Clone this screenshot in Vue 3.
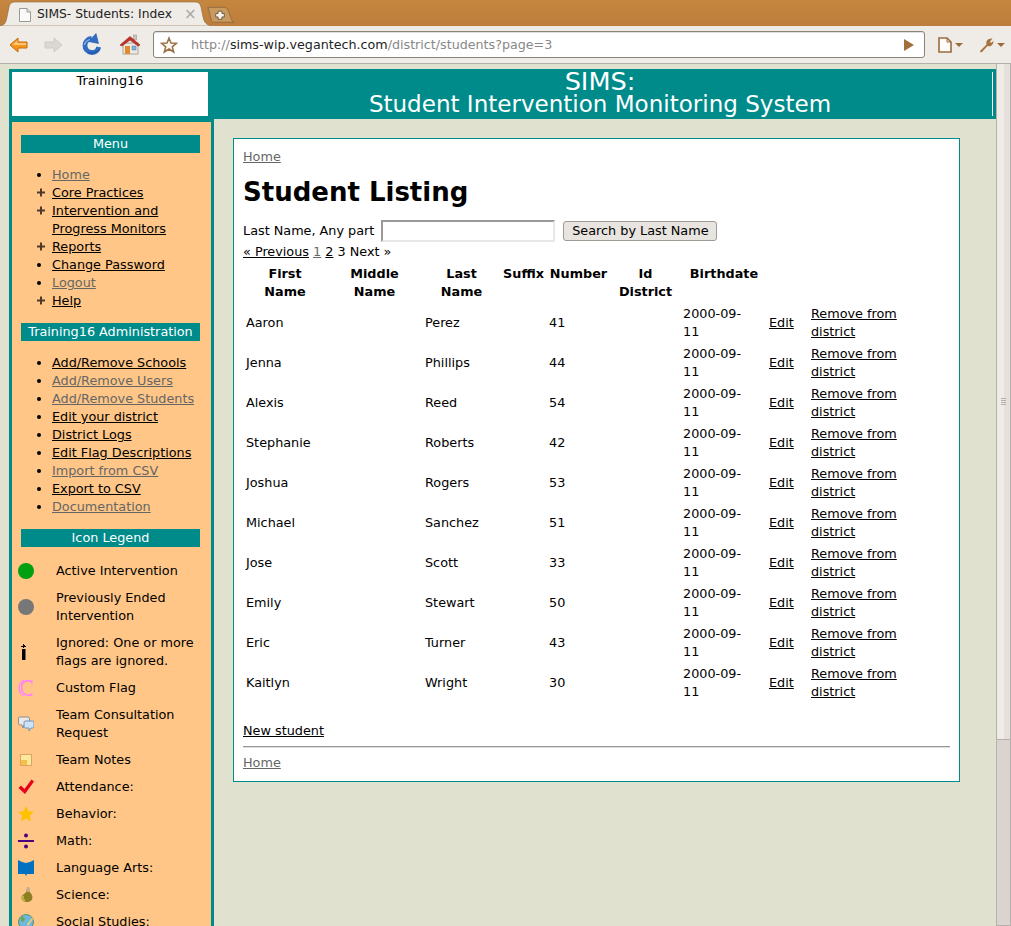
<script setup>
const menu = [
  { t: 'Home', v: 1 }, { t: 'Core Practices', p: 1 }, { t: 'Intervention and Progress Monitors', p: 1 },
  { t: 'Reports', p: 1 }, { t: 'Change Password' }, { t: 'Logout', v: 1 }, { t: 'Help', p: 1 }
]
const admin = [
  { t: 'Add/Remove Schools' }, { t: 'Add/Remove Users', v: 1 }, { t: 'Add/Remove Students', v: 1 },
  { t: 'Edit your district' }, { t: 'District Logs' }, { t: 'Edit Flag Descriptions' },
  { t: 'Import from CSV', v: 1 }, { t: 'Export to CSV' }, { t: 'Documentation', v: 1 }
]
const legend = [
  ['active', 'Active Intervention'], ['ended', 'Previously Ended Intervention'],
  ['ignored', 'Ignored: One or more flags are ignored.'], ['custom', 'Custom Flag'],
  ['consult', 'Team Consultation Request'], ['notes', 'Team Notes'], ['check', 'Attendance:'],
  ['star', 'Behavior:'], ['math', 'Math:'], ['book', 'Language Arts:'], ['science', 'Science:'],
  ['globe', 'Social Studies:']
]
const students = [
  ['Aaron', 'Perez', 41], ['Jenna', 'Phillips', 44], ['Alexis', 'Reed', 54], ['Stephanie', 'Roberts', 42],
  ['Joshua', 'Rogers', 53], ['Michael', 'Sanchez', 51], ['Jose', 'Scott', 33], ['Emily', 'Stewart', 50],
  ['Eric', 'Turner', 43], ['Kaitlyn', 'Wright', 30]
]
</script>

<template>
  <div class="window">
    <div class="tabbar">
      <div class="tab">
        <svg class="tabshape" width="216" height="26" viewBox="0 0 216 26">
          <path d="M0 26 C5 25 6 22 7 17 L9 7 C10 3 12 2 16 2 L194 2 C198 2 200 3 201 7 L203 17 C204 22 206 25 212 26 Z" fill="#efebe7" stroke="#8f6a3e" stroke-width="0.6" />
        </svg>
        <svg class="favicon" width="14" height="16" viewBox="0 0 14 16">
          <path d="M1.5 1.5 H9 L12.5 5 V14.5 H1.5 Z" fill="#fbfafa" stroke="#9b9b95" />
          <path d="M9 1.5 V5 H12.5" fill="#e2e2de" stroke="#9b9b95" />
        </svg>
        <span class="tabtitle">SIMS- Students: Index</span>
        <span class="tabclose">×</span>
      </div>
      <svg class="newtab" width="27" height="18" viewBox="0 0 28 18">
        <path d="M1 1 H18 C20 1 21 2 22 4 L26 15 C26.500 16 27 16.500 28 16.500 H7 C5.500 16.500 5 16 4.500 14.500 Z" fill="#c99a5f" stroke="#94693a" />
        <path d="M11.500 5 H15.500 V7.500 H18 V11 H15.500 V13.500 H11.500 V11 H9 V7.500 H11.500 Z" fill="#f7f3ec" stroke="#6e5a44" />
      </svg>
    </div>
    <div class="toolbar">
      <svg class="tool back" width="20" height="18" viewBox="0 0 20 18">
        <path d="M1 9 L9 2 V6 H18 V12 H9 V16 Z" fill="#f5971d" stroke="#c9690c" />
        <path d="M4 8.500 L8.500 4.500 V7 H17 V9 H4 Z" fill="#fcc677" />
      </svg>
      <svg class="tool forward" width="20" height="18" viewBox="0 0 20 18">
        <path d="M19 9 L11 2 V6 H2 V12 H11 V16 Z" fill="#dbd7d2" stroke="#cfcac5" />
      </svg>
      <svg class="tool reload" width="20" height="23" viewBox="0 0 20 23">
        <path d="M9.500 5.500 A7 7 0 1 0 16.800 14" fill="none" stroke="#2f6cc2" stroke-width="4.800" />
        <path d="M14 0.500 L16.500 10.500 L6.500 8.500 Z" fill="#2f6cc2" stroke="#2559a8" stroke-width="0.600" stroke-linejoin="round" />
        <path d="M2.500 12 C3 9 5 7.300 8 6.500" fill="none" stroke="#9cc0ec" stroke-width="1.200" />
        <path d="M6 19.500 C10 21.200 15 19.500 17.500 16" fill="none" stroke="#1d4d9a" stroke-width="1" />
      </svg>
      <svg class="tool home" width="22" height="21" viewBox="0 0 22 21">
        <rect x="14.500" y="1" width="3" height="5" fill="#c9c5bf" stroke="#8d8880" stroke-width="0.500" />
        <rect x="4" y="9" width="15" height="11" fill="#ece9e3" stroke="#a9a49c" />
        <path d="M1 11 L11 2.500 L21 11 L19 12 L11 6 L3 12 Z" fill="#c2302a" stroke="#98211c" stroke-width="0.600" />
        <rect x="6" y="12" width="5" height="8" fill="#e08a2e" />
        <rect x="13" y="12" width="4" height="4" fill="#7fb0d8" stroke="#5d7f9e" stroke-width="0.500" />
      </svg>
      <div class="omnibox">
        <svg class="omnistar" width="18" height="18" viewBox="0 0 18 18">
          <path d="M9 2 L11 7 L16.500 7.300 L12.300 10.800 L13.700 16 L9 13 L4.300 16 L5.700 10.800 L1.500 7.300 L7 7 Z" fill="#fbf8f3" stroke="#9a6f43" stroke-width="1.500" />
        </svg>
        <span class="url"><span class="dim">http://</span>sims-wip.vegantech.com<span class="dim">/district/students?page=3</span></span>
        <svg class="go" width="10" height="12" viewBox="0 0 10 12"><path d="M0 0 L10 6 L0 12 Z" fill="#a16f3c" /></svg>
      </div>
      <svg class="tool page-menu" width="14" height="16" viewBox="0 0 14 16">
        <path d="M1 1 H9 L13 5 V15 H1 Z" fill="#fdfcfa" stroke="#9a6c3d" stroke-width="1.600" />
        <path d="M9 1 V5 H13" fill="none" stroke="#9a6c3d" />
      </svg>
      <svg class="caret" width="8" height="4" viewBox="0 0 8 4"><path d="M0 0 H8 L4 4 Z" fill="#9a6c3d" /></svg>
      <svg class="tool wrench" width="16" height="16" viewBox="0 0 16 16">
        <path d="M2 14 L8.500 7.500 C7.500 4 10 1 14.500 1.500 L12 4.500 L13 6 L15.500 4 C15.500 8 12.500 10 9.500 9 L4 15 C3 15.500 1.500 15 2 14 Z" fill="#a8723c" />
      </svg>
      <svg class="caret" width="8" height="4" viewBox="0 0 8 4"><path d="M0 0 H8 L4 4 Z" fill="#9a6c3d" /></svg>
    </div>

    <div class="viewport">
      <div class="page">
        <header class="banner">
          <div class="district">Training16</div>
          <div class="title">
            <div class="title-main">SIMS:</div>
            <div>Student Intervention Monitoring System</div>
          </div>
        </header>
        <div class="body">
          <aside class="sidebar">
            <h3 class="bar">Menu</h3>
            <ul class="links">
              <li v-for="m in menu" :key="m.t" :class="{ plus: m.p }"><a href="#" :class="{ visited: m.v }">{{ m.t }}</a></li>
            </ul>
            <h3 class="bar">Training16 Administration</h3>
            <ul class="links">
              <li v-for="m in admin" :key="m.t"><a href="#" :class="{ visited: m.v }">{{ m.t }}</a></li>
            </ul>
            <h3 class="bar">Icon Legend</h3>
            <div class="legend">
              <div v-for="l in legend" :key="l[0]" class="legend-row">
                <svg class="licon" width="16" height="16" viewBox="0 0 16 16">
                  <circle v-if="l[0] === 'active'" cx="8" cy="8" r="8" fill="#00a010" />
                  <circle v-else-if="l[0] === 'ended'" cx="8" cy="8" r="8" fill="#777777" />
                  <g v-else-if="l[0] === 'ignored'" fill="#000" transform="translate(-1 0)">
                    <path d="M6 0 H7 V1 H8 V2 H9 V3 H7 V4 H6 V3 H4 V2 H6 Z" />
                    <rect x="5" y="5" width="3" height="1" />
                    <rect x="5" y="5" width="3.500" height="11" />
                  </g>
                  <g v-else-if="l[0] === 'custom'" fill="none" stroke="#ff80ff">
                    <path d="M6 0.500 C-0.500 3 -0.500 13 6 16" stroke-width="1.200" />
                    <path d="M14 2 C10 -1 3.500 1 3.500 8 C3.500 14 10 17 14.500 14" stroke-width="1.600" />
                    <path d="M14 0.500 V4.500" stroke-width="1" />
                  </g>
                  <g v-else-if="l[0] === 'consult'">
                    <path d="M1 1 H10 Q11.500 1 11.500 3 V7 Q11.500 9 10 9 H6 L5 12 L4 9 H2 Q0.500 9 0.500 7 V3 Q0.500 1 1 1 Z" fill="#ece9e4" stroke="#8f8f8f" />
                    <path d="M7 5 H14.500 Q16 5 16 7 V10 Q16 12 14.500 12 H13 L11 15 L11 12 H7.500 Q6 12 6 10 V7 Q6 5 7 5 Z" fill="#cfe3f7" stroke="#6f97c4" />
                  </g>
                  <g v-else-if="l[0] === 'notes'">
                    <rect x="2.500" y="2.500" width="11" height="11" fill="#fbe9a0" stroke="#e0a35c" />
                    <path d="M3 8 H9 V13 H3 Z" fill="#f3c04a" />
                  </g>
                  <path v-else-if="l[0] === 'check'" d="M0.500 9 L3 6.500 L6.500 10 L13.500 0.500 L16 2.500 L7 15 Z" fill="#e8001c" />
                  <path v-else-if="l[0] === 'star'" d="M8 0 L10.300 5.200 L16 5.800 L11.800 9.700 L13 15.500 L8 12.500 L3 15.500 L4.200 9.700 L0 5.800 L5.700 5.200 Z" fill="#ffc000" />
                  <g v-else-if="l[0] === 'math'" fill="#4b0082">
                    <circle cx="8" cy="2.500" r="2" />
                    <rect x="0" y="7" width="16" height="2" />
                    <circle cx="8" cy="13.500" r="2" />
                  </g>
                  <path v-else-if="l[0] === 'book'" d="M0 0 L4 2 L8 3 L12 2 L16 0 V14 H9 L8 16 L7 14 H0 Z" fill="#0070c0" />
                  <g v-else-if="l[0] === 'science'">
                    <path d="M9 0 L11 0 L11.500 5 C15.500 8 16 15 9 15 C2.500 15 2 9 6 7 C8 6 9 4 9 0 Z" fill="#8e7f22" />
                    <path d="M9 0 H11 L11.300 5 L8.500 5 Z" fill="#b9ad9a" />
                    <path d="M5.500 9 C4 10.500 4.500 13 7 13.500" fill="none" stroke="#c9bb45" stroke-width="1.800" />
                  </g>
                  <g v-else-if="l[0] === 'globe'">
                    <circle cx="8" cy="8" r="7.500" fill="#6fb7dd" stroke="#5f8f6e" />
                    <path d="M3 3 C6 2 8 5 6 7 C4 9 2 7 3 3 Z" fill="#6aa84f" />
                    <path d="M9 10 L14 4 L15 5 L10 12 Z" fill="#e6d574" />
                  </g>
                </svg>
                <span class="ltext">{{ l[1] }}</span>
              </div>
            </div>
          </aside>
          <main class="main">
            <div class="card">
              <a href="#" class="visited">Home</a>
              <h1>Student Listing</h1>
              <form class="search" @submit.prevent>
                <label for="lastname">Last Name, Any part</label>
                <input id="lastname" type="text">
                <button type="button">Search by Last Name</button>
              </form>
              <div class="pager"><a href="#">« Previous</a> <a href="#" class="visited">1</a> <a href="#">2</a> 3 Next »</div>
              <table>
                <colgroup>
                  <col class="c1"><col class="c2"><col class="c3"><col class="c4"><col class="c5"><col class="c6"><col class="c7"><col class="c8"><col class="c9">
                </colgroup>
                <thead>
                  <tr>
                    <th>First<br>Name</th><th>Middle<br>Name</th><th>Last<br>Name</th><th>Suffix</th><th>Number</th><th>Id<br>District</th><th>Birthdate</th><th></th><th></th>
                  </tr>
                </thead>
                <tbody>
                  <tr v-for="s in students" :key="s[2]">
                    <td>{{ s[0] }}</td><td></td><td>{{ s[1] }}</td><td></td><td>{{ s[2] }}</td><td></td>
                    <td>2000-09-<br>11</td>
                    <td><a href="#">Edit</a></td>
                    <td class="remove"><a href="#">Remove from district</a></td>
                  </tr>
                </tbody>
              </table>
              <p class="new"><a href="#">New student</a></p>
              <hr>
              <a href="#" class="visited">Home</a>
            </div>
          </main>
        </div>
      </div>
      <div class="scrollbar">
        <div class="thumb"><span class="grip"></span></div>
      </div>
    </div>
  </div>
</template>

<style>
html, body { margin: 0; overflow: hidden; }
</style>

<style scoped>
.window {
  width: 1011px;
  height: 926px;
  overflow: hidden;
  display: flex;
  flex-direction: column;
  font-family: "DejaVu Sans", sans-serif;
  font-size: 12.8px;
  line-height: 18px;
  color: #000;
}
a { color: #000; text-decoration: underline; }
a.visited { color: #666; }

.tabbar {
  height: 26px;
  flex: none;
  display: flex;
  align-items: flex-start;
  background: linear-gradient(#c5863f, #bd7e3d);
  overflow: hidden;
}
.tab {
  position: relative;
  width: 206px;
  height: 26px;
  display: flex;
  align-items: center;
  flex: none;
}
.tabshape { position: absolute; left: 0; top: 0; }
.favicon { position: relative; margin-left: 18px; margin-top: 3px; }
.tabtitle { position: relative; margin-left: 5px; width: 147px; font-size: 12.3px; color: #222; margin-top: 2px; white-space: nowrap; }
.tabclose { position: relative; color: #a9a5a0; font-size: 15px; margin-top: 2px; }
.newtab { margin-left: 1px; margin-top: 6px; flex: none; }

.toolbar {
  height: 37px;
  flex: none;
  display: flex;
  align-items: center;
  background: #efebe7;
  border-bottom: 1px solid #b3aea8;
}
.tool { flex: none; }
.back { margin-left: 9px; }
.forward { margin-left: 14px; }
.reload { margin-left: 19px; }
.home { margin-left: 17px; }
.omnibox {
  margin-left: 12px;
  width: 770px;
  height: 25px;
  flex: none;
  display: flex;
  align-items: center;
  background: #fff;
  border: 1px solid #8c8478;
  border-radius: 3px;
  box-shadow: inset 0 1px 1px #ddd;
}
.omnistar { margin-left: 6px; flex: none; }
.url { margin-left: 13px; flex: 1; color: #222; font-size: 12.700px; white-space: nowrap; }
.dim { color: #888; }
.go { margin-right: 10px; flex: none; }
.page-menu { margin-left: 13px; }
.caret { margin-left: 3px; flex: none; }
.wrench { margin-left: 15px; }

.viewport { flex: 1; min-height: 0; display: flex; }
.page {
  flex: 1;
  min-width: 0;
  background: #e0e2cf;
  padding: 5px 0 0 9px;
  overflow: hidden;
}
.banner {
  height: 44px;
  padding: 3px;
  background: #008b8b;
  display: flex;
}
.district {
  width: 196px;
  flex: none;
  background: #fff;
  text-align: center;
}
.title {
  flex: 1;
  min-width: 0;
  color: #fff;
  text-align: center;
  font-size: 23.040px;
  line-height: 23px;
  border-right: 1px solid #fff;
}
.title-main { font-size: 25.600px; line-height: 19px; margin-bottom: 2px; }
.body { display: flex; align-items: flex-start; }
.sidebar {
  width: 199px;
  flex: none;
  background: #ffc687;
  border: 3px solid #008b8b;
  padding-top: 13px;
}
.bar {
  margin: 0 11px 0 9px;
  background: #008b8b;
  color: #fff;
  font-size: 12.8px;
  font-weight: normal;
  line-height: 18px;
  text-align: center;
}
.links { margin: 13px 0; padding: 0 0 0 40px; list-style: disc; }
.plus { list-style-image: url("data:image/svg+xml,%3Csvg xmlns='http://www.w3.org/2000/svg' width='8' height='9'%3E%3Cpath d='M3 0.500H5V3.500H8V5.500H5V8.500H3V5.500H0V3.500H3Z' fill='%2350392a'/%3E%3C/svg%3E"); }
.legend { display: flex; flex-direction: column; gap: 9px; padding: 15px 11px 0 6px; }
.legend-row { display: flex; align-items: center; }
.licon { flex: none; margin-right: 22px; }
.ltext { flex: 1; }

.main { flex: 1; min-width: 0; padding: 19px 0 0 19px; }
.card {
  width: 707px;
  background: #fff;
  border: 1px solid #008b8b;
  padding: 9px;
}
h1 {
  margin: 8px 0 10px;
  font-size: 26px;
  line-height: 36px;
  font-weight: bold;
}
.search { display: flex; align-items: center; margin: 0; }
.search input {
  width: 170px;
  height: 18px;
  padding: 0;
  margin: 0 8px 0 7px;
  border-width: 2px;
  border-style: solid;
  border-color: #999 #e8e8e8 #e8e8e8 #999;
  background: #fff;
}
.search button {
  width: 154px;
  height: 20px;
  padding: 0;
  font: inherit;
  color: #000;
  background: #e8e4df;
  border: 1px solid #a09a94;
  border-radius: 3px;
}
.pager { margin-top: 1px; margin-bottom: 1px; }
table {
  width: 706px;
  table-layout: fixed;
  border-collapse: separate;
  border-spacing: 2px;
}
th, td { padding: 1px; }
th { font-weight: bold; text-align: center; vertical-align: top; }
td { text-align: left; vertical-align: middle; }
td.remove { padding-right: 36px; }
.c1 { width: 80px; }
.c2 { width: 95px; }
.c3 { width: 75px; }
.c4 { width: 45px; }
.c5 { width: 61px; }
.c6 { width: 69px; }
.c7 { width: 84px; }
.c8 { width: 40px; }
.c9 { width: 137px; }
.new { margin: 18px 0 6px; }
hr {
  margin: 0 0 6px;
  border: 0;
  height: 2px;
  background: linear-gradient(#999 50%, #ddd 50%);
}

.scrollbar {
  width: 15px;
  flex: none;
  box-sizing: border-box;
  background: #dbd3ce;
  border: 1px solid #b5b0ac;
  border-width: 0 1px 1px 1px;
}
.thumb {
  height: 676px;
  box-sizing: border-box;
  background: linear-gradient(90deg, #efebe7 55%, #e5e0dc 55%);
  border-bottom: 1px solid #b5b0ac;
  display: flex;
  align-items: center;
  justify-content: center;
}
.grip { width: 5px; height: 8px; background: repeating-linear-gradient(#b5b0ac 0 1px, transparent 1px 2px); }
</style>
